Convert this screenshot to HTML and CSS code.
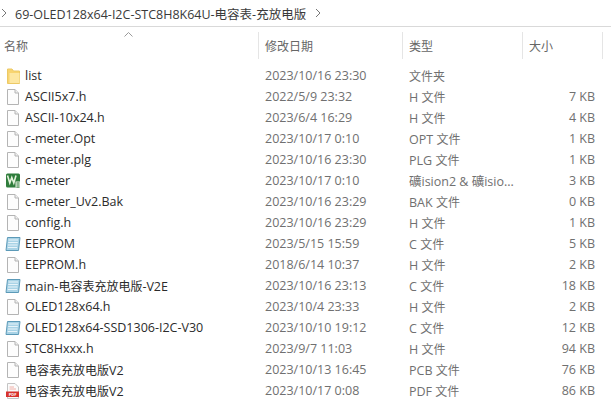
FILE: index.html
```html
<!DOCTYPE html>
<html lang="zh">
<head>
<meta charset="utf-8">
<title>69-OLED128x64</title>
<link rel="stylesheet" href="styles.css">
</head>
<body>
<svg class="sprites" width="0" height="0" aria-hidden="true">
  <defs>
    <symbol id="doc" viewBox="0 0 16 16"><path d="M2.5 .5H10L13.5 4V15.5H2.5Z" fill="#fdfdfd" stroke="#b4b4b4"/><path d="M10 .5V4H13.5" fill="#efefef" stroke="#b4b4b4"/></symbol>
    <symbol id="folder" viewBox="0 0 16 16"><path d="M2.5 1H7L8.5 3H14.5V15.5H2.5Z" fill="#f8d470" stroke="#ecc965"/><path d="M4.5 5H14.5V15H4.5Z" fill="#fde7a2"/></symbol>
    <symbol id="csrc" viewBox="0 0 16 16"><path d="M2.5 1.5H15L13.5 14.5H1Z" fill="#a9d3e6" stroke="#5c9ab8"/><path d="M3.5 4H13M3.2 6.5H12.8M3 9H12.5M2.8 11.5H12.2" stroke="#e8f4fa" stroke-width="1"/></symbol>
    <symbol id="uv" viewBox="0 0 16 16"><rect x="1" y=".5" width="14" height="14" rx="1.5" fill="#2f7d3c"/><path d="M2.5 2.5L4.8 10L6.8 4.5L8.8 10L11 2.5" fill="none" stroke="#e4f3dc" stroke-width="1.6"/><rect x="10.5" y="8.5" width="4.5" height="6" fill="#e9f2e4"/><path d="M11.5 10H14.5M11.5 12H14.5M11.5 14H14.5" stroke="#2f7d3c"/></symbol>
    <symbol id="pdf" viewBox="0 0 16 16"><path d="M2.5 .5H10L13.5 4V15.5H2.5Z" fill="#fbfbfb" stroke="#c4c4c4"/><path d="M4.5 4H9M4.5 6H11" stroke="#f0b0a8"/><rect x="1" y="8.5" width="13" height="5.5" fill="#d7322d"/><text x="7.5" y="13" class="pdftxt">PDF</text></symbol>
  </defs>
</svg>
<nav class="crumb">
  <svg class="chev" viewBox="0 0 8 10"><path d="M2 1L6 5L2 9" fill="none" stroke="#777" stroke-width="1"/></svg>
  <span class="path">69-OLED128x64-I2C-STC8H8K64U-电容表-充放电版</span>
  <svg class="chev end" viewBox="0 0 8 10"><path d="M2 1L6 5L2 9" fill="none" stroke="#777" stroke-width="1"/></svg>
</nav>
<header class="head">
  <svg class="sort" viewBox="0 0 9 5"><path d="M.5 4.5L4.5 .5L8.5 4.5" fill="none" stroke="#9a9a9a"/></svg>
  <div class="hcell">名称</div>
  <div class="hcell">修改日期</div>
  <div class="hcell">类型</div>
  <div class="hcell">大小</div>
</header>
<main class="list">
  <div class="row"><div class="name"><svg class="ico"><use href="#folder"/></svg>list</div><div>2023/10/16 23:30</div><div class="zh">文件夹</div><div class="size"></div></div>
  <div class="row"><div class="name"><svg class="ico"><use href="#doc"/></svg>ASCII5x7.h</div><div>2022/5/9 23:32</div><div>H <span class="zh">文件</span></div><div class="size">7 KB</div></div>
  <div class="row"><div class="name"><svg class="ico"><use href="#doc"/></svg>ASCII-10x24.h</div><div>2023/6/4 16:29</div><div>H <span class="zh">文件</span></div><div class="size">4 KB</div></div>
  <div class="row"><div class="name"><svg class="ico"><use href="#doc"/></svg>c-meter.Opt</div><div>2023/10/17 0:10</div><div>OPT <span class="zh">文件</span></div><div class="size">1 KB</div></div>
  <div class="row"><div class="name"><svg class="ico"><use href="#doc"/></svg>c-meter.plg</div><div>2023/10/16 23:30</div><div>PLG <span class="zh">文件</span></div><div class="size">1 KB</div></div>
  <div class="row"><div class="name"><svg class="ico"><use href="#uv"/></svg>c-meter</div><div>2023/10/17 0:10</div><div>礦ision2 &amp; 礦isio...</div><div class="size">3 KB</div></div>
  <div class="row"><div class="name"><svg class="ico"><use href="#doc"/></svg>c-meter_Uv2.Bak</div><div>2023/10/16 23:29</div><div>BAK <span class="zh">文件</span></div><div class="size">0 KB</div></div>
  <div class="row"><div class="name"><svg class="ico"><use href="#doc"/></svg>config.h</div><div>2023/10/16 23:29</div><div>H <span class="zh">文件</span></div><div class="size">1 KB</div></div>
  <div class="row"><div class="name"><svg class="ico"><use href="#csrc"/></svg>EEPROM</div><div>2023/5/15 15:59</div><div>C <span class="zh">文件</span></div><div class="size">5 KB</div></div>
  <div class="row"><div class="name"><svg class="ico"><use href="#doc"/></svg>EEPROM.h</div><div>2018/6/14 10:37</div><div>H <span class="zh">文件</span></div><div class="size">2 KB</div></div>
  <div class="row"><div class="name"><svg class="ico"><use href="#csrc"/></svg><span>main-<span class="zh">电容表充放电版</span>-V2E</span></div><div>2023/10/16 23:13</div><div>C <span class="zh">文件</span></div><div class="size">18 KB</div></div>
  <div class="row"><div class="name"><svg class="ico"><use href="#doc"/></svg>OLED128x64.h</div><div>2023/10/4 23:33</div><div>H <span class="zh">文件</span></div><div class="size">2 KB</div></div>
  <div class="row"><div class="name"><svg class="ico"><use href="#csrc"/></svg>OLED128x64-SSD1306-I2C-V30</div><div>2023/10/10 19:12</div><div>C <span class="zh">文件</span></div><div class="size">12 KB</div></div>
  <div class="row"><div class="name"><svg class="ico"><use href="#doc"/></svg>STC8Hxxx.h</div><div>2023/9/7 11:03</div><div>H <span class="zh">文件</span></div><div class="size">94 KB</div></div>
  <div class="row"><div class="name"><svg class="ico"><use href="#doc"/></svg><span><span class="zh">电容表充放电版</span>V2</span></div><div>2023/10/13 16:45</div><div>PCB <span class="zh">文件</span></div><div class="size">76 KB</div></div>
  <div class="row"><div class="name"><svg class="ico"><use href="#pdf"/></svg><span><span class="zh">电容表充放电版</span>V2</span></div><div>2023/10/17 0:08</div><div>PDF <span class="zh">文件</span></div><div class="size">86 KB</div></div>
</main>
</body>
</html>
```
FILE: styles.css
```css
html, body { margin: 0; padding: 0; background: #fff; overflow: hidden; }
body {
  width: 611px;
  height: 419px;
  font-family: "Open Sans", "Noto Sans CJK SC", sans-serif;
  font-size: 12.5px;
  color: #707070;
}
.zh { font-size: 12px; }
.pdftxt { font-size: 4px; font-weight: 700; fill: #fff; text-anchor: middle; }
.sprites { display: block; height: 0; }
.crumb {
  height: 27px;
  box-sizing: border-box;
  border-bottom: 1px solid #d9d9d9;
  display: flex;
  align-items: center;
  gap: 5px;
  padding: 0;
  color: #3a3a3a;
  font-size: 12.5px;
}
.chev { width: 8px; height: 10px; flex: none; }
.chev.end { margin-left: 3px; }
.path { margin-left: 2px; }
.head {
  position: relative;
  margin-top: 5px;
  height: 27px;
  display: grid;
  grid-template-columns: 259px 144px 120px 80px;
  color: #666;
  font-size: 12px;
}
.sort { position: absolute; left: 124px; top: 0; width: 9px; height: 5px; }
.hcell {
  padding-left: 6px;
  display: flex;
  align-items: center;
  border-right: 1px solid #e5e5e5;
}
.head .hcell:first-of-type { padding-left: 4px; }
.list { margin-top: 6px; }
.row {
  height: 21px;
  display: grid;
  grid-template-columns: 265px 144px 120px 66px;
  align-items: center;
  white-space: nowrap;
}
.name { display: flex; align-items: center; gap: 4px; padding-left: 5px; color: #2b2b2b; }
.ico { width: 16px; height: 16px; flex: none; }
.size { text-align: right; }
```
